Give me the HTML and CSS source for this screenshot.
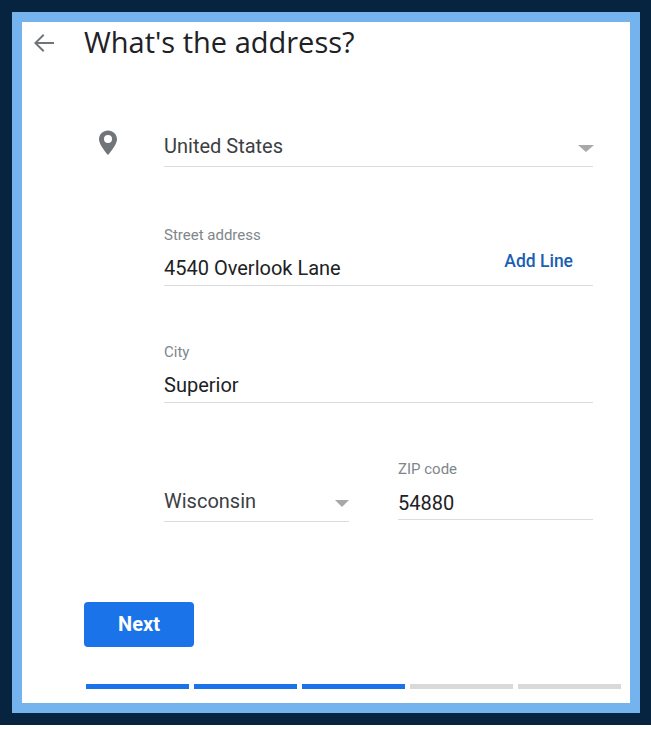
FILE: index.html
```html
<!DOCTYPE html>
<html lang="en">
<head>
  <meta charset="UTF-8">
  <meta name="viewport" content="width=device-width, initial-scale=1.0">
  <title>What's the address?</title>
  <link rel="stylesheet" href="styles.css">
</head>
<body>

  <div class="backdrop">
    <div class="frame">
      <div class="card">

        <!-- Header -->
        <div class="header">
          <a href="#" class="back" aria-label="Back">
            <svg width="24" height="24" viewBox="0 0 24 24"><path d="M22 11H5.800l6.600-6.600L11 3 2 12l9 9 1.400-1.400L5.800 13H22z" fill="#70757a"/></svg>
          </a>
          <h1>What's the address?</h1>
        </div>

        <!-- Form -->
        <div class="form">
          <div class="pin">
            <svg width="20" height="26" viewBox="0 0 20 26"><path fill-rule="evenodd" d="M10 0.500C5.100 0.500 1 4.300 1 9.200 1 15 10 25 10 25s9-10 9-15.800C19 4.300 14.900 0.500 10 0.500zm0 12.500a4 4 0 1 1 0-8 4 4 0 0 1 0 8z" fill="#70757a"/></svg>
          </div>
          <div class="fields">
            <div class="field select country">
              <span class="value muted">United States</span>
              <span class="arrow"></span>
            </div>
            <div class="field street">
              <label>Street address</label>
              <div class="row">
                <span class="value">4540 Overlook Lane</span>
                <a href="#" class="add-line">Add Line</a>
              </div>
            </div>
            <div class="field city">
              <label>City</label>
              <span class="value">Superior</span>
            </div>
            <div class="split">
              <div class="field select state">
                <span class="value muted">Wisconsin</span>
                <span class="arrow"></span>
              </div>
              <div class="field zip">
                <label>ZIP code</label>
                <span class="value">54880</span>
              </div>
            </div>
          </div>
        </div>

        <button class="next">Next</button>

        <!-- Progress -->
        <div class="progress">
          <span class="step done"></span>
          <span class="step done"></span>
          <span class="step done"></span>
          <span class="step"></span>
          <span class="step"></span>
        </div>

      </div>
    </div>
  </div>

</body>
</html>
```
FILE: styles.css
```css
/* Base */
body {
  font-family: Roboto, Arial, sans-serif;
  margin: 0;
  padding: 0;
  background-color: #fff;
}
.backdrop {
  background-color: #062340;
  height: 725px;
  padding: 12px 11px 0 12px;
  box-sizing: border-box;
}
.frame {
  background-color: #74b3ee;
  padding: 10px;
  height: 701px;
  box-sizing: border-box;
}
.card {
  background-color: #fff;
  height: 100%;
  box-sizing: border-box;
  padding-top: 3px;
}
/* Header */
.header {
  display: flex;
  align-items: center;
  height: 36px;
}
.back {
  display: flex;
  width: 62px;
  padding-left: 10px;
  box-sizing: border-box;
}
h1 {
  margin: 0 0 4px;
  font-family: "Open Sans", Roboto, sans-serif;
  font-size: 29px;
  font-weight: 400;
  color: #202124;
}
/* Form */
.form {
  display: flex;
  margin-top: 68px;
}
.pin {
  width: 142px;
  padding: 1px 0 0 76px;
  box-sizing: border-box;
}
.fields {
  width: 429px;
}
.field {
  border-bottom: 1px solid #dadce0;
}
.value {
  font-size: 20px;
  color: #202124;
  line-height: 24px;
}
.muted {
  color: #3c4043;
}
label {
  display: block;
  font-size: 15px;
  line-height: 18px;
  color: #80868b;
}
.select {
  display: flex;
  justify-content: space-between;
  align-items: center;
}
.arrow {
  width: 0;
  height: 0;
  border-left: 8px solid transparent;
  border-right: 8px solid transparent;
  border-top: 7px solid #a8a8a8;
  margin: 6px -1px 0 0;
}
.country {
  height: 33px;
  padding-bottom: 4px;
}
.street {
  margin-top: 59px;
  padding-bottom: 5px;
}
.row {
  display: flex;
  justify-content: space-between;
  margin-top: 12px;
}
.add-line {
  font-size: 17.500px;
  line-height: 20px;
  font-weight: 500;
  color: #1a5fb4;
  text-decoration: none;
  margin: -5px 20px 0 0;
}
.city {
  margin-top: 57px;
  padding-bottom: 5px;
}
.city .value {
  display: block;
  margin-top: 12px;
}
.split {
  display: flex;
  justify-content: space-between;
  align-items: flex-end;
  margin-top: 57px;
}
.state {
  width: 185px;
  height: 40px;
}
.state .arrow {
  border-left-width: 7px;
  border-right-width: 7px;
  margin: 4px 0 0;
}
.zip {
  width: 195px;
  padding-bottom: 4px;
  margin-bottom: 2px;
}
.zip .value {
  display: block;
  margin-top: 13px;
}
/* Button */
.next {
  display: block;
  width: 110px;
  height: 45px;
  margin: 80px 0 0 62px;
  padding: 0 0 2px;
  border: none;
  border-radius: 4px;
  background-color: #1a73e8;
  color: #fff;
  font-family: Roboto, Arial, sans-serif;
  font-size: 20px;
  font-weight: 700;
}
/* Progress bar */
.progress {
  display: flex;
  gap: 5px;
  margin: 37px 9px 0 64px;
}
.step {
  flex: 1;
  height: 5px;
  background-color: #d9d9d9;
}
.step.done {
  background-color: #1a73e8;
}
```
